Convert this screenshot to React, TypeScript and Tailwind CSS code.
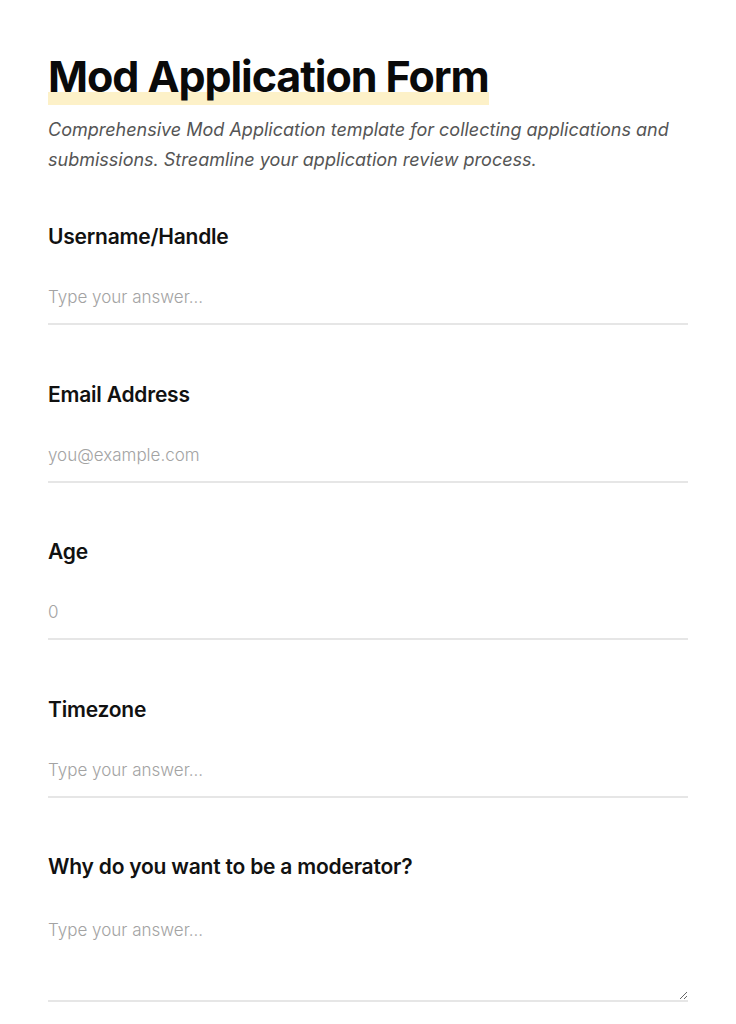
import React from 'react';

const fieldInput =
  'w-full bg-transparent border-0 border-b-2 border-[#e6e6e6] pt-3 pb-[14px] text-[17px] leading-6 font-light text-[#222] placeholder:text-[#a3a3a3] outline-none';

const Field = ({ label, first, children }: { label: string; first?: boolean; children: React.ReactNode }) => (
  <div className={first ? 'mt-12' : 'mt-[55.5px]'}>
    <label className="block text-[21px] leading-[28px] font-semibold text-[#111] tracking-[-0.01em]">{label}</label>
    {children}
  </div>
);

export default function App() {
  return (
    <div className="min-h-screen bg-white px-12 pt-12 pb-16 font-['Inter',sans-serif]">
      <h1 className="inline-block text-[43px] leading-[57px] font-bold tracking-[-0.025em] text-[#0a0a0a] bg-[linear-gradient(transparent_77%,#fdf1c8_77%)]">
        Mod Application Form
      </h1>
      <p className="mt-[10px] text-[18px] leading-[30px] italic text-[#555]">
        Comprehensive Mod Application template for collecting applications and submissions. Streamline your
        application review process.
      </p>

      <form>
        <Field label="Username/Handle" first>
          <input type="text" placeholder="Type your answer..." className={`mt-[22px] ${fieldInput}`} />
        </Field>
        <Field label="Email Address">
          <input type="email" placeholder="you@example.com" className={`mt-[22px] ${fieldInput}`} />
        </Field>
        <Field label="Age">
          <input type="number" placeholder="0" className={`mt-[22px] ${fieldInput}`} />
        </Field>
        <Field label="Timezone">
          <input type="text" placeholder="Type your answer..." className={`mt-[22px] ${fieldInput}`} />
        </Field>
        <Field label="Why do you want to be a moderator?">
          <textarea
            placeholder="Type your answer..."
            className="mt-[24.5px] block h-[96px] w-full resize-y bg-transparent border-0 border-b-2 border-[#e6e6e6] pt-3 pb-2 text-[17px] leading-6 font-light text-[#222] placeholder:text-[#a3a3a3] outline-none"
          />
        </Field>
      </form>
    </div>
  );
}
